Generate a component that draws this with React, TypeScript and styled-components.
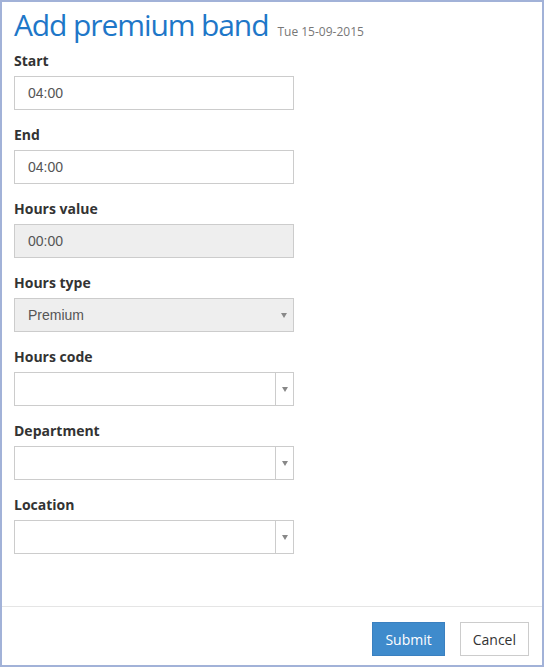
import React from "react";
import styled, { createGlobalStyle } from "styled-components";

const Global = createGlobalStyle`
  html, body { margin: 0; padding: 0; background: #fff; }
  * { box-sizing: border-box; }
`;

const Frame = styled.div`
  width: 544px;
  height: 667px;
  border: 2px solid #a2b2d8;
  display: flex;
  flex-direction: column;
  font-family: "Open Sans", "Liberation Sans", sans-serif;
  color: #333;
`;

const Body = styled.div`
  flex: 1;
  padding: 3px 12px 0 12px;
`;

const Title = styled.h1`
  margin: 0 0 6px 0;
  font-size: 30px;
  line-height: 40px;
  letter-spacing: -1.1px;
  font-weight: 400;
  color: #1e77c8;
`;

const DateText = styled.small`
  font-size: 12px;
  line-height: 1;
  letter-spacing: 0;
  color: #777;
  font-weight: 400;
  margin-left: 9px;
`;

const Group = styled.div`
  margin-bottom: 15px;
`;

const Label = styled.label`
  display: block;
  font-size: 14px;
  line-height: 20px;
  font-weight: 700;
  margin-bottom: 5px;
  color: #333;
`;

const Field = styled.div<{ $disabled?: boolean }>`
  width: 280px;
  height: 34px;
  border: 1px solid #ccc;
  background: ${(p) => (p.$disabled ? "#eee" : "#fff")};
  display: flex;
  align-items: center;
  padding-left: 13px;
  font-family: "Liberation Sans", Arial, sans-serif;
  font-size: 14px;
  color: #555;
`;

const Value = styled.span`
  flex: 1;
`;

const ArrowCell = styled.div<{ $divider?: boolean }>`
  width: 18px;
  height: 100%;
  display: flex;
  align-items: center;
  justify-content: center;
  border-left: ${(p) => (p.$divider ? "1px solid #ccc" : "none")};
`;

const Arrow = styled.span`
  width: 0;
  height: 0;
  border-left: 3px solid transparent;
  border-right: 3px solid transparent;
  border-top: 5px solid #888;
`;

const Footer = styled.div`
  border-top: 1px solid #e5e5e5;
  padding: 15px 13px 9px 0;
  display: flex;
  justify-content: flex-end;
  gap: 15px;
`;

const Button = styled.button<{ $primary?: boolean }>`
  height: 34px;
  padding: 0 12px;
  font-family: "Open Sans", "Liberation Sans", sans-serif;
  font-size: 14px;
  border: 1px solid ${(p) => (p.$primary ? "#3a80c0" : "#ccc")};
  background: ${(p) => (p.$primary ? "#3f8bcc" : "#fff")};
  color: ${(p) => (p.$primary ? "#fff" : "#333")};
  border-radius: 0;
`;

const TextField = ({ label, value, disabled }: { label: string; value: string; disabled?: boolean }) => (
  <Group>
    <Label>{label}</Label>
    <Field $disabled={disabled}>
      <Value>{value}</Value>
    </Field>
  </Group>
);

const SelectField = ({
  label,
  value,
  disabled,
  divider,
}: {
  label: string;
  value?: string;
  disabled?: boolean;
  divider?: boolean;
}) => (
  <Group>
    <Label>{label}</Label>
    <Field $disabled={disabled}>
      <Value>{value}</Value>
      <ArrowCell $divider={divider}>
        <Arrow />
      </ArrowCell>
    </Field>
  </Group>
);

export default function App() {
  return (
    <>
      <Global />
      <Frame>
        <Body>
          <Title>
            Add premium band<DateText>Tue 15-09-2015</DateText>
          </Title>
          <TextField label="Start" value="04:00" />
          <TextField label="End" value="04:00" />
          <TextField label="Hours value" value="00:00" disabled />
          <SelectField label="Hours type" value="Premium" disabled />
          <SelectField label="Hours code" divider />
          <SelectField label="Department" divider />
          <SelectField label="Location" divider />
        </Body>
        <Footer>
          <Button $primary>Submit</Button>
          <Button>Cancel</Button>
        </Footer>
      </Frame>
    </>
  );
}
